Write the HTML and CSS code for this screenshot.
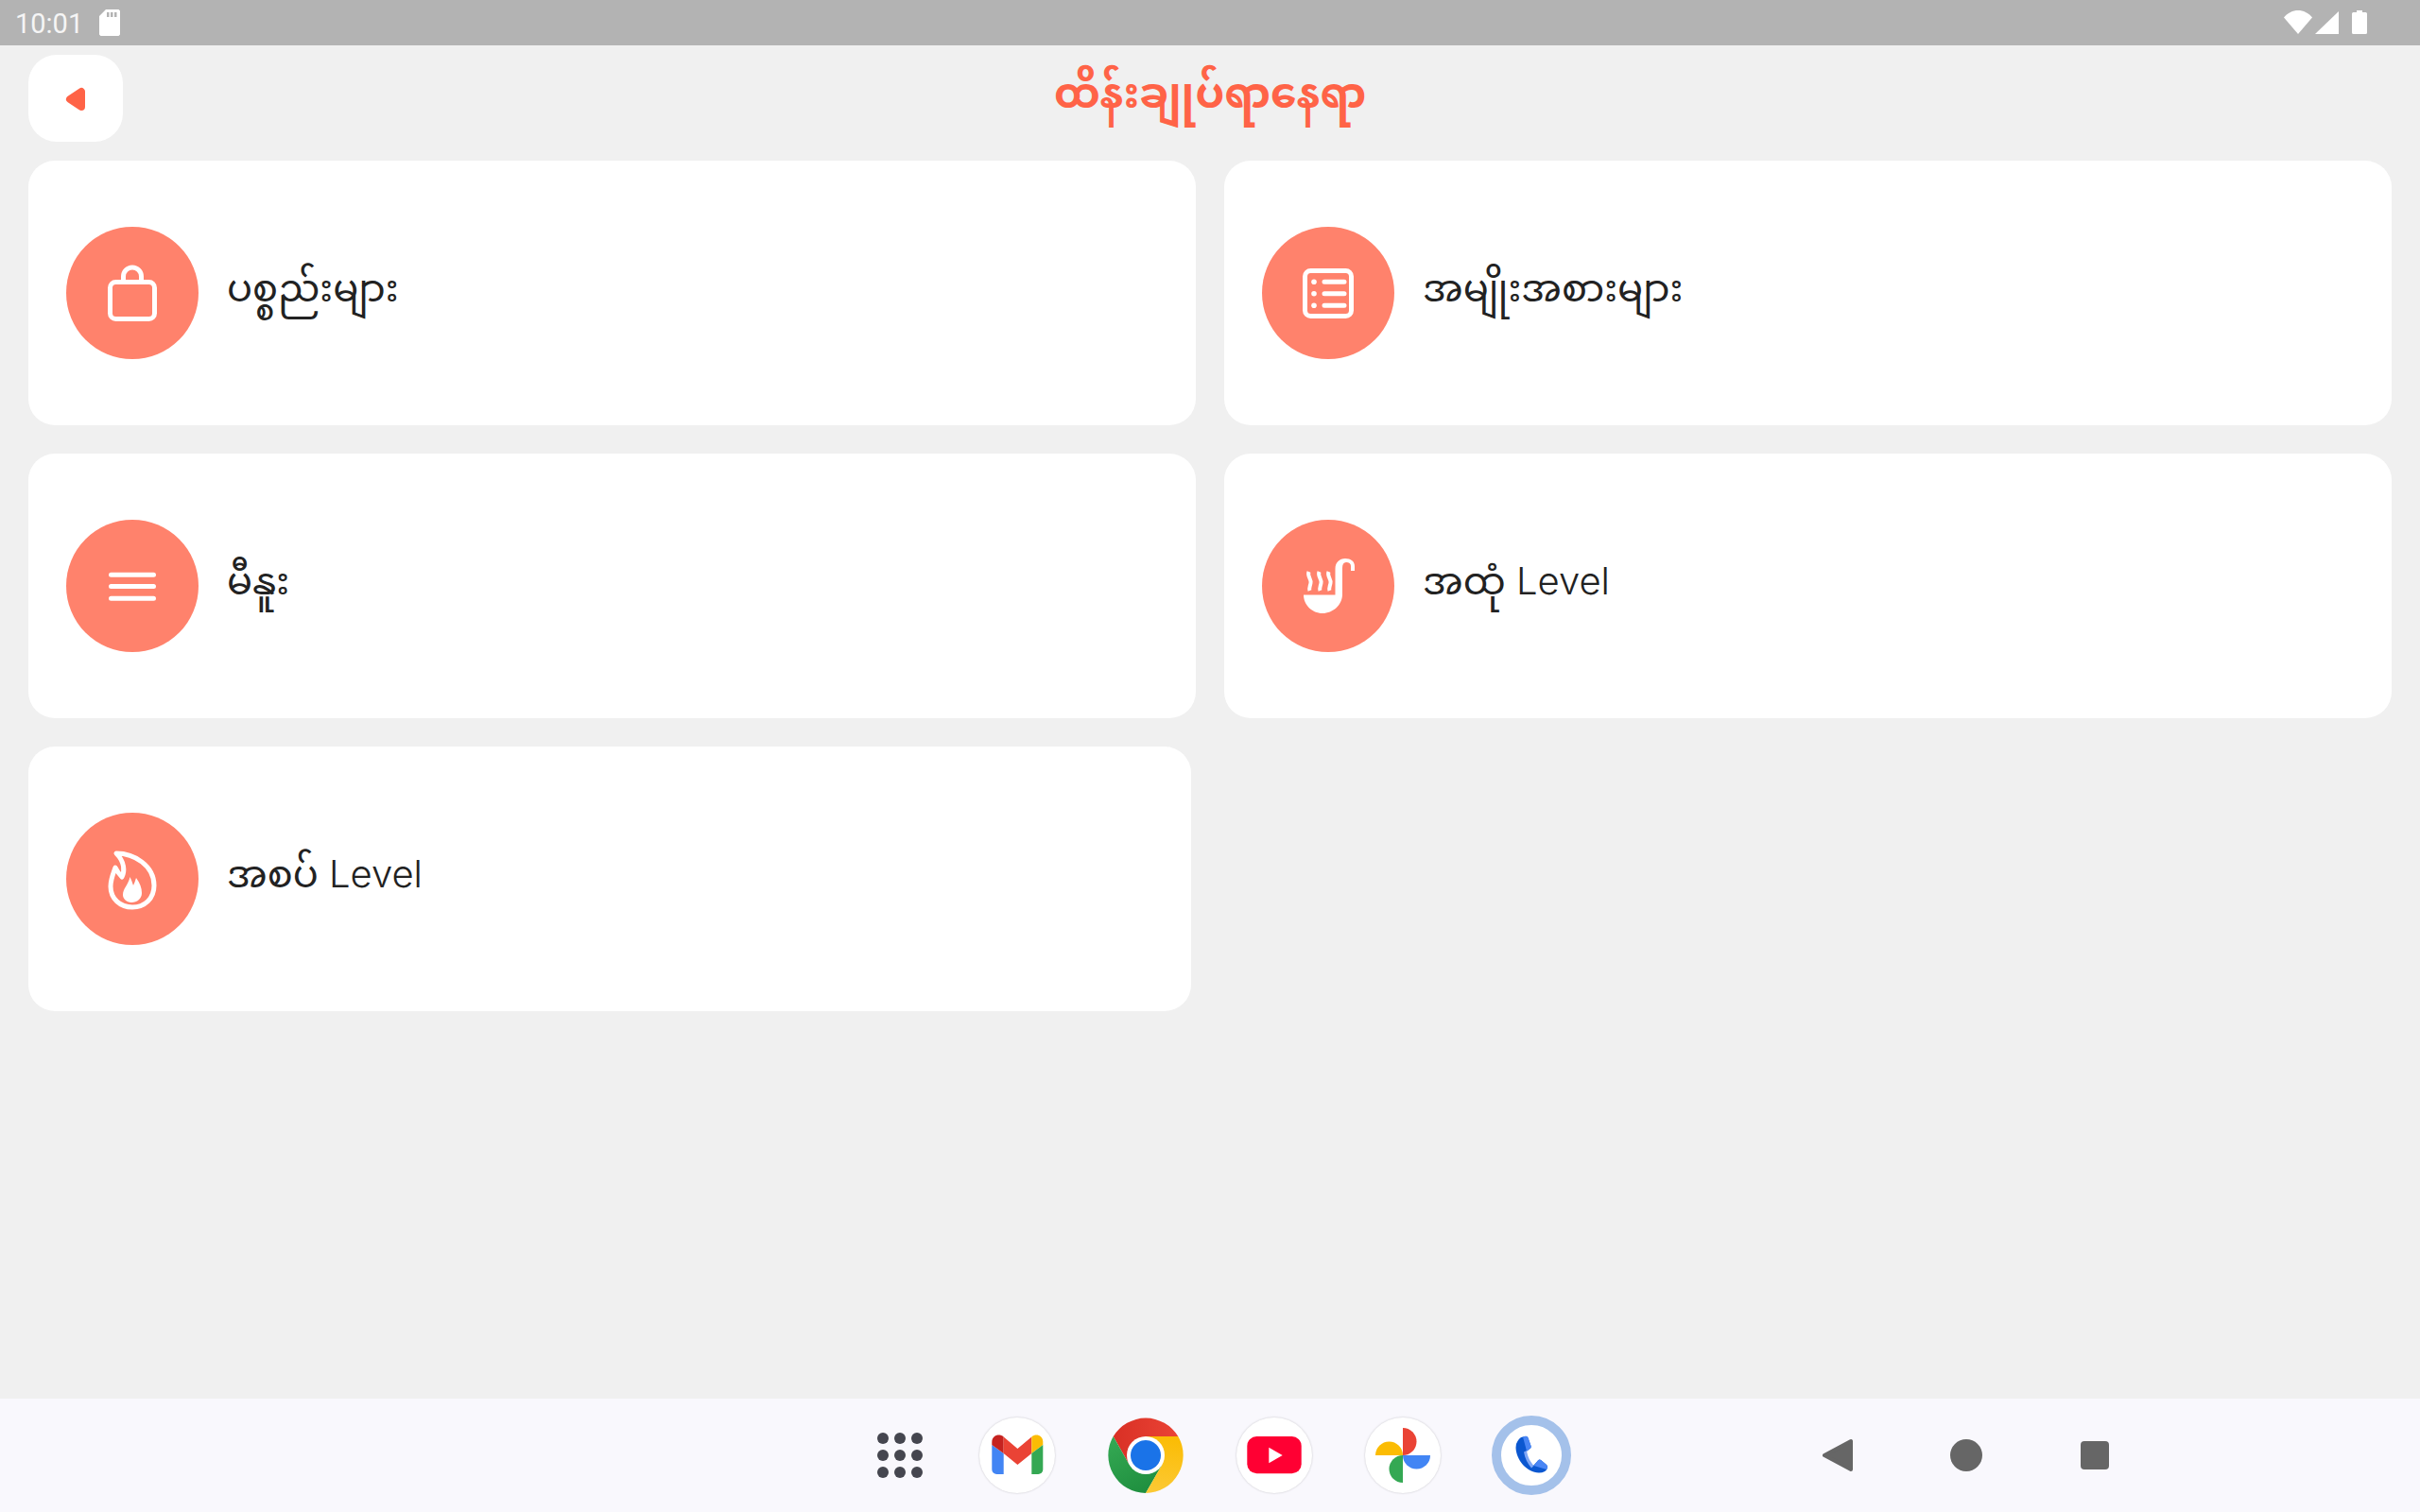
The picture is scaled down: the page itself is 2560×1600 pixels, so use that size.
FILE: index.html
```html
<!DOCTYPE html>
<html lang="my">
<head>
<meta charset="utf-8">
<title>ထိန်းချုပ်ရာနေရာ</title>
<link rel="stylesheet" href="styles.css">
</head>
<body>
<div class="status-bar">
  <div class="status-left">
    <span class="clock">10:01</span>
    <svg class="sd" viewBox="0 0 22 28"><path class="white" fill-rule="evenodd" d="M7 0H20.500L22 1.500V26.500L20.500 28H1.500L0 26.500V7ZM8 3V8H10.500V3ZM12 3V8H14.500V3ZM16 3V8H18.500V3Z"/></svg>
  </div>
  <div class="status-right">
    <svg class="wifi" viewBox="0 0 30 25"><path class="white" d="M0 7.500C8 -2.500 22 -2.500 30 7.500L15 25Z"/></svg>
    <svg class="signal" viewBox="0 0 25 24"><path class="white" d="M25 0V24H0Z"/></svg>
    <svg class="battery" viewBox="0 0 16 25"><path class="white" d="M5 0H11V2H14.500Q16 2 16 3.500V23.500Q16 25 14.500 25H1.500Q0 25 0 23.500V3.500Q0 2 1.500 2H5Z"/></svg>
  </div>
</div>

<main class="screen">
  <header class="top">
    <button class="back" type="button" aria-label="back">
      <svg class="back-icon" viewBox="0 0 24 30"><path class="tri" d="M6 16L18 8V24Z"/></svg>
    </button>
    <h1 class="title">ထိန်းချုပ်ရာနေရာ</h1>
  </header>

  <section class="grid">
    <article class="card">
      <span class="badge">
        <svg class="glyph" viewBox="0 0 140 140"><g class="line"><rect x="46.500" y="58.500" width="47" height="39" rx="6"/><path d="M60.500 57V52.500a9.500 9.500 0 0 1 19 0V57"/></g></svg>
      </span>
      <span class="label">ပစ္စည်းများ</span>
    </article>
    <article class="card">
      <span class="badge">
        <svg class="glyph" viewBox="0 0 140 140"><g class="line"><rect x="45.500" y="46.500" width="49" height="48" rx="6"/><path d="M66 58.300H87M66 70.700H87M66 83.300H87"/></g><circle class="white" cx="55" cy="58.300" r="2.800"/><circle class="white" cx="55" cy="70.700" r="2.800"/><circle class="white" cx="55" cy="83.300" r="2.800"/></svg>
      </span>
      <span class="label">အမျိုးအစားများ</span>
    </article>
    <article class="card">
      <span class="badge">
        <svg class="glyph" viewBox="0 0 140 140"><g class="line"><path d="M47.500 58.300H92.500M47.500 70.500H92.500M47.500 83.300H92.500"/></g></svg>
      </span>
      <span class="label">မီနူး</span>
    </article>
    <article class="card">
      <span class="badge">
        <svg class="glyph" viewBox="0 0 140 140"><path class="white" d="M44 79.500H77.500V52C77.500 45 82 41 88 41C94 41 98 44 98 49V54H94V49C94 46.500 92 45 89 45C86.500 45 85 47 85 51V79C85 90 75 99 64 99C53 99 44 90 44 79.500Z"/><g class="steam"><path d="M49.500 55C47.500 60 52.500 63 51.500 67C51 70 49.500 72 50.500 75"/><path d="M60.500 55C58.500 60 63.500 63 62.500 67C62 70 60.500 72 61.500 75"/><path d="M70.500 55C68.500 60 73.500 63 72.500 67C72 70 70.500 72 71.500 75"/></g></svg>
      </span>
      <span class="label">အထုံ <span class="latin">Level</span></span>
    </article>
    <article class="card card-short">
      <span class="badge">
        <svg class="glyph" viewBox="0 0 140 140"><path class="flame" d="M53 43C72 43 93 56 93 77C93 91 83 100 70 100C57 100 47 91 47 78C47 70 50 64 52 58C53 60 57 66 59 68C62 62 62 52 53 43Z"/><path class="white" d="M67.500 68C69 71 70 74 71 77C72 75 73 72 74 69C78 74 80 80 80 85C80 91 75 95 69 95C64 95 60 91 60 87C60 80 66 76 67.500 68Z"/></svg>
      </span>
      <span class="label">အစပ် <span class="latin">Level</span></span>
    </article>
  </section>
</main>

<nav class="nav-bar">
  <div class="dock">
    <svg class="launcher" viewBox="0 0 60 60"><g class="ink"><circle cx="12" cy="12" r="6"/><circle cx="30" cy="12" r="6"/><circle cx="48" cy="12" r="6"/><circle cx="12" cy="30" r="6"/><circle cx="30" cy="30" r="6"/><circle cx="48" cy="30" r="6"/><circle cx="12" cy="48" r="6"/><circle cx="30" cy="48" r="6"/><circle cx="48" cy="48" r="6"/></g></svg>
    <svg class="app" viewBox="0 0 80 80"><circle class="disc" cx="40" cy="40" r="40"/><path class="g-blue" d="M13.300 29V55a5 5 0 0 0 5 5H25.700V38Z"/><path class="g-dark" d="M13.300 29V26C13.300 19 21 16.500 25.700 20.500V38Z"/><path class="g-red" d="M25.700 20.500L40.400 33L55.300 20.500V38L40.400 50L25.700 38Z"/><path class="g-yellow" d="M55.300 20.500C60 16.500 67.300 19 67.300 26V29L55.300 38Z"/><path class="g-green" d="M55.300 38L67.300 29V55a5 5 0 0 1 -5 5H55.300Z"/></svg>
    <svg class="app" viewBox="0 0 80 80"><defs><linearGradient id="chromeRed" x1="0" y1="0.500" x2="1" y2="0.500"><stop offset="0" stop-color="#d93025"/><stop offset="1" stop-color="#ea4335"/></linearGradient><linearGradient id="chromeGreen" x1="0.200" y1="0" x2="0.700" y2="1"><stop offset="0" stop-color="#34a853"/><stop offset="1" stop-color="#1e8e3e"/></linearGradient><linearGradient id="chromeYellow" x1="0.500" y1="0" x2="0.400" y2="1"><stop offset="0" stop-color="#fbbc04"/><stop offset="1" stop-color="#fcc934"/></linearGradient></defs><path class="c-red" d="M5.700 20A40 40 0 0 1 74.300 20H40L22.700 50Z"/><path class="c-green" d="M5.700 20A40 40 0 0 0 40 80L57.300 50H22.700Z"/><path class="c-yellow" d="M74.300 20A40 40 0 0 1 40 80L57.300 50L40 20Z"/><circle class="white" cx="40" cy="40" r="20"/><circle class="c-blue" cx="40" cy="40" r="16"/></svg>
    <svg class="app" viewBox="0 0 80 80"><circle class="disc" cx="40" cy="40" r="40"/><rect class="y-red" x="11.300" y="20" width="57.400" height="39.300" rx="10"/><path class="white" d="M34.300 31.700L48.700 40L34.300 48.300Z"/></svg>
    <svg class="app" viewBox="0 0 80 80"><circle class="disc" cx="40" cy="40" r="40"/><path class="p-yellow" d="M11 40A14.500 14.500 0 0 1 40 40Z"/><path class="p-red" d="M40 11A14.500 14.500 0 0 1 40 40Z"/><path class="p-blue" d="M69 40A14.500 14.500 0 0 1 40 40Z"/><path class="p-green" d="M40 69A14.500 14.500 0 0 1 40 40Z"/></svg>
    <svg class="app app-phone" viewBox="0 0 84 84"><circle class="ring" cx="42" cy="42" r="37"/><path class="ph-dark" d="M31 23L36 21.800Q38 21.800 38.500 23.500L41.500 32Q42 34 40.500 35L36 38.500C37 44 40 49 44 53L49 47.500Q50.500 46 52 47L58 52Q59.500 53.500 59 55.500Q57 60.500 50 60.500C37 60 26 47 25.500 34Q25.500 27 31 23Z"/><path class="ph-light" d="M33 22.500L36 21.800Q38 21.800 38.500 23.500L41.500 32Q42 34 40.500 35L37 37.500Z"/><path class="ph-strip" d="M34 38.500L37 37C38 44 41 49 44.500 53L42 55.500C38 51 35 45 34 38.500Z"/><path class="ph-light" d="M44.500 53L49 47.500Q50.500 46 52 47L58 52Q59.500 53.500 59 55.500L58 57Z"/></svg>
  </div>
  <div class="sys-buttons">
    <svg class="sys" viewBox="0 0 40 40"><path class="sys-fill" d="M6 20L34 5V35Z"/></svg>
    <svg class="sys" viewBox="0 0 40 40"><circle class="sys-solid" cx="20" cy="20" r="17"/></svg>
    <svg class="sys" viewBox="0 0 40 40"><rect class="sys-solid" x="5" y="5" width="30" height="30" rx="4"/></svg>
  </div>
</nav>
</body>
</html>
```

FILE: styles.css
```css
* { box-sizing: border-box; }
html, body { margin: 0; padding: 0; }
body {
  width: 2560px;
  height: 1600px;
  display: flex;
  flex-direction: column;
  overflow: hidden;
  background: #f0f0f0;
  font-family: Inter, "Noto Sans Myanmar", "Noto Sans", sans-serif;
}
.white { fill: #fff; }

.status-bar {
  height: 48px;
  flex: none;
  background: #b3b3b3;
  display: flex;
  align-items: flex-start;
  justify-content: space-between;
  padding: 0 56px 0 16px;
}
.status-left { display: flex; align-items: flex-start; gap: 17px; padding-top: 10px; }
.clock { font-family: Roboto, sans-serif; font-size: 29px; line-height: 30px; color: #f5f5f5; font-weight: 400; }
.sd { width: 22px; height: 28px; display: block; }
.status-right { display: flex; align-items: flex-start; padding-top: 11px; }
.wifi { width: 30px; height: 25px; margin-right: 3px; }
.signal { width: 25px; height: 24px; margin-top: 1px; margin-right: 14px; }
.battery { width: 16px; height: 25px; }

.screen { flex: 1; min-height: 0; padding: 10px 30px 0; display: flex; flex-direction: column; }
.top { position: relative; height: 92px; flex: none; display: flex; align-items: center; justify-content: center; }
.back {
  position: absolute;
  left: 0;
  top: 0;
  width: 100px;
  height: 92px;
  border: 0;
  padding: 0;
  background: #fff;
  border-radius: 30px;
  display: flex;
  align-items: center;
  justify-content: center;
}
.back-icon { width: 24px; height: 30px; }
.tri { fill: #ff6347; stroke: #ff6347; stroke-width: 8; stroke-linejoin: round; }
.title {
  margin: -12px 0 0;
  font-size: 44px;
  line-height: 62px;
  font-weight: 700;
  color: #ff6347;
}

.grid {
  margin-top: 20px;
  display: grid;
  grid-template-columns: 1235px 1235px;
  grid-auto-rows: 280px;
  column-gap: 30px;
  row-gap: 30px;
}
.card {
  background: #fff;
  border-radius: 28px;
  display: flex;
  align-items: center;
  padding: 0 40px;
  gap: 30px;
}
.card-short { margin-right: 5px; }
.badge {
  width: 140px;
  height: 140px;
  flex: none;
  border-radius: 50%;
  background: #ff826c;
  display: block;
}
.glyph { width: 140px; height: 140px; display: block; }
.line { fill: none; stroke: #fff; stroke-width: 5; stroke-linecap: round; stroke-linejoin: round; }
.steam { fill: none; stroke: #fff; stroke-width: 4; }
.flame { fill: none; stroke: #fff; stroke-width: 5; stroke-linejoin: round; }
.label {
  font-size: 40px;
  line-height: 56px;
  color: #222;
  margin-top: -11px;
}
.latin { font-weight: 300; }

.nav-bar {
  height: 120px;
  flex: none;
  background: #f9f8fd;
  display: flex;
  align-items: center;
  padding-left: 922px;
}
.dock { display: flex; align-items: center; gap: 56px; }
.launcher { width: 60px; height: 60px; margin-right: -2px; }
.ink { fill: #45464f; }
.app { width: 80px; height: 80px; flex: none; overflow: visible; }
.app-phone { width: 84px; height: 84px; margin-left: -2px; }
.disc { fill: #fff; filter: drop-shadow(0 0 1px rgba(0, 0, 0, 0.2)); }
.g-blue { fill: #4285f4; }
.g-dark { fill: #c5221f; }
.g-red { fill: #ea4335; }
.g-yellow { fill: #fbbc04; }
.g-green { fill: #34a853; }
.c-red { fill: url(#chromeRed); }
.c-green { fill: url(#chromeGreen); }
.c-yellow { fill: url(#chromeYellow); }
.c-blue { fill: #1a73e8; }
.y-red { fill: #ff0033; }
.p-yellow { fill: #fbbc04; }
.p-red { fill: #ea4335; }
.p-blue { fill: #4285f4; }
.p-green { fill: #34a853; }
.ring { fill: #fff; stroke: #a4c1ea; stroke-width: 10; }
.ph-dark { fill: #0b57d0; }
.ph-light { fill: #4a86f5; }
.ph-strip { fill: #7ea6f6; }

.sys-buttons { display: flex; align-items: center; gap: 96px; margin-left: 262px; }
.sys { width: 40px; height: 40px; flex: none; }
.sys-fill { fill: #666; stroke: #666; stroke-width: 4; stroke-linejoin: round; }
.sys-solid { fill: #666; }
```
